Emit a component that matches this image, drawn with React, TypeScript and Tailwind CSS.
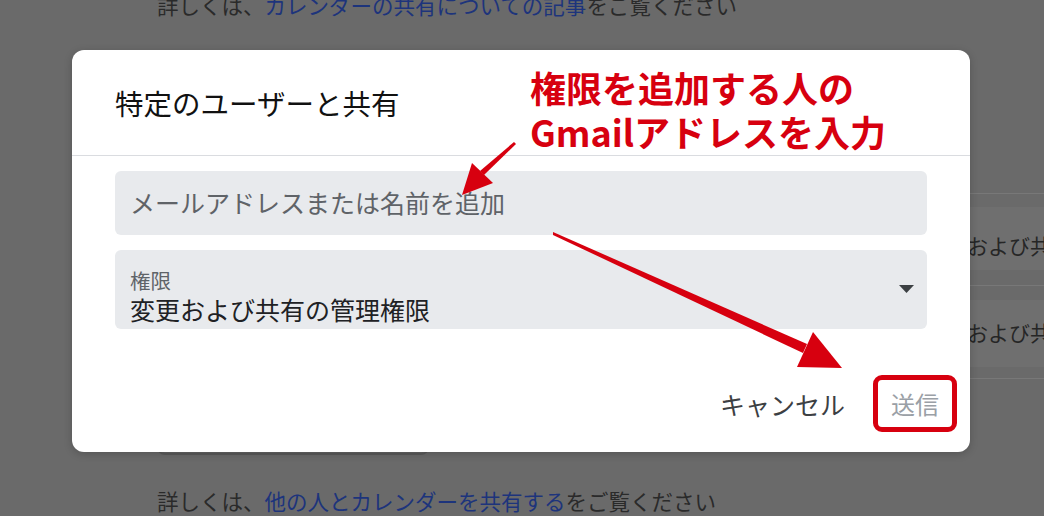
const jp = { fontFamily: '"Noto Sans CJK JP", "Noto Sans", sans-serif' };

function BackgroundPage() {
  return (
    <div className="flex flex-col">
      <p className="-mt-[9px] h-[28px] pl-[157px] text-[21.5px] leading-[28px] text-[#2a2a2a] whitespace-nowrap">
        詳しくは、<span className="text-[#1d347c]">カレンダーの共有についての記事</span>をご覧ください
      </p>

      {/* rows peeking out on the right */}
      <div className="mt-[174px] ml-[880px] flex flex-col">
        <div className="border-t border-[#787878] pt-[13px] pb-[15px]">
          <div className="h-[63px] bg-[#6f6f6f] pl-[45px] pt-[26px] text-[21px] leading-[24px] text-[#262626] whitespace-nowrap">
            変更および共有の管理権限
          </div>
        </div>
        <div className="border-t border-[#787878] pt-[14px] pb-[11px]">
          <div className="h-[67px] bg-[#6f6f6f] pl-[45px] pt-[20px] text-[21px] leading-[24px] text-[#262626] whitespace-nowrap">
            変更および共有の管理権限
          </div>
        </div>
        <div className="border-t border-[#787878]" />
      </div>

      {/* button hidden behind the dialog */}
      <div className="mt-[30px] ml-[157px] h-[46px] w-[272px] rounded-[8px] bg-[#656565] border-b-2 border-[#5a5a5a]" />

      <p className="mt-[32px] h-[28px] pl-[157px] text-[21.5px] leading-[28px] text-[#2a2a2a] whitespace-nowrap">
        詳しくは、<span className="text-[#1d347c]">他の人とカレンダーを共有する</span>をご覧ください
      </p>
    </div>
  );
}

function ShareDialog() {
  return (
    <div className="absolute left-[72px] top-[50px] flex h-[402px] w-[898px] flex-col rounded-[12px] bg-white shadow-[0_2px_8px_rgba(0,0,0,0.2)]">
      <div className="h-[106px] border-b border-[#dadce0] pl-[43px] pt-[35px]">
        <h2 className="text-[28.5px] leading-[36px] text-[#111111]">特定のユーザーと共有</h2>
      </div>

      <div className="flex flex-col px-[43px] pt-[15px]">
        <div className="flex h-[64px] items-center rounded-[6px] bg-[#e8eaed] px-[15px] text-[25px] text-[#5f6368]">
          メールアドレスまたは名前を追加
        </div>

        <div className="mt-[15px] flex h-[79px] justify-between rounded-[6px] bg-[#e8eaed] pl-[15px] pr-[13px] pt-[19px]">
          <div className="flex flex-col">
            <span className="text-[20.5px] leading-[22px] text-[#5f6368]">権限</span>
            <span className="mt-[4px] text-[25px] leading-[29px] text-[#202124]">変更および共有の管理権限</span>
          </div>
          <svg width="15" height="8" viewBox="0 0 15 8" className="mt-[16px]">
            <path d="M0 0 L15 0 L7.5 8 Z" fill="#3c4043" />
          </svg>
        </div>
      </div>

      <div className="mt-[46px] flex items-center justify-end gap-[28px] pr-[13px]">
        <button className="text-[25px] leading-[30px] text-[#3c4043]">キャンセル</button>
        <button className="flex h-[57px] w-[84px] items-center justify-center rounded-[9px] border-[5px] border-[#d7000f] text-[24px] text-[#9aa0a6]">
          送信
        </button>
      </div>
    </div>
  );
}

function Annotation() {
  return (
    <>
      <div className="absolute left-[530px] top-[65px] text-[36px] font-bold leading-[44px] text-[#d7000f] whitespace-nowrap">
        <div>権限を追加する人の</div>
        <div>Gmailアドレスを入力</div>
      </div>
      <svg className="pointer-events-none absolute left-0 top-0" width="1044" height="516" viewBox="0 0 1044 516">
        {/* arrow to the email field */}
        <polygon points="514,142 516,144 484,175 480,171" fill="#d7000f" />
        <polygon points="472,163 493,183 462,195" fill="#d7000f" />
        {/* arrow to the send button */}
        <polygon points="553,232 553,235 803,353 807,344" fill="#d7000f" />
        <polygon points="813,332 842,368 797,367" fill="#d7000f" />
      </svg>
    </>
  );
}

export default function App() {
  return (
    <div className="relative h-[516px] w-[1044px] overflow-hidden bg-[#6a6a6a]" style={jp}>
      <BackgroundPage />
      <ShareDialog />
      <Annotation />
    </div>
  );
}
